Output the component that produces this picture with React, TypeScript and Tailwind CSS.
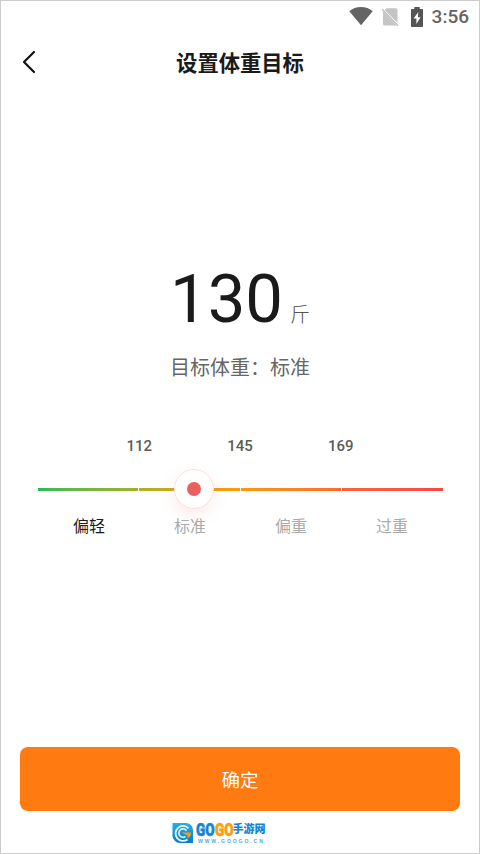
// 体重目标设置页
// 自上而下：状态栏、标题栏、目标体重、区间滑块、确定按钮、底部站点标识。

import { useState } from 'react';

interface Range { label: string; color: string }

const RANGES: Range[] = [
  { label: '偏轻', color: 'bg-linear-to-r from-[#22bb57] to-[#a0b020]' },
  { label: '标准', color: 'bg-linear-to-r from-[#acb022] to-[#ff9a06]' },
  { label: '偏重', color: 'bg-linear-to-r from-[#fb990c] to-[#ff6a2c]' },
  { label: '过重', color: 'bg-linear-to-r from-[#fb6336] to-[#fb4545]' },
];
const LIMITS = [112, 145, 169]; // 各区间之间的分界值（斤）

function StatusBar() {
  return (
    <div className="flex h-8 items-center justify-end pr-[10px] text-[#646464]">
      <svg className="mt-[-2px] h-5 w-6" viewBox="0 0 24 20" fill="currentColor">
        <path d="M.3 5.2C3.4 2.500 7.400 1 12 1s8.600 1.500 11.700 4.200L12 19.200z" />
      </svg>
      <svg className="mt-[-1px] ml-2 h-5 w-[18px]" viewBox="0 0 18 20">
        <path d="M5.500 1.200H15A1.500 1.500 0 0 1 16.500 2.700V15.800L3.600 3zM2 4.500 15.500 18.500H3.500A1.500 1.500 0 0 1 2 17z" fill="#c4c4c4" />
        <path d="M1 2.200 17 18.800" stroke="#bdbdbd" strokeWidth="1.500" />
      </svg>
      <svg className="mt-[-1px] ml-[11px] h-5 w-[14px]" viewBox="0 0 14 20">
        <path d="M4.300 0h5.400v2h2.500c.5 0 .8.300.8.800v16.400c0 .5-.3.800-.8.800H1.800c-.5 0-.8-.3-.8-.8V2.800c0-.5.300-.8.800-.8h2.500z" fill="#555" />
        <path d="M8.300 5 3.600 11.500h2.800V17l4.200-6.800H7.900z" fill="#fff" />
      </svg>
      <span className="ml-[8px] text-[19px] leading-8 font-medium">3:56</span>
    </div>
  );
}

function SiteMark() {
  return (
    <div className="ml-[152px] flex h-6 items-center">
      <svg className="h-[22px] w-[22px]" viewBox="0 0 22 22">
        <defs>
          <linearGradient id="mark" x1="0" y1="0" x2="0" y2="1">
            <stop offset="0" stopColor="#27aee6" />
            <stop offset="1" stopColor="#087ac6" />
          </linearGradient>
        </defs>
        <path d="M.5 1H14a7 7 0 0 1 7 7v13H8a7.500 7.500 0 0 1-7.500-7.500z" fill="url(#mark)" />
        <path d="M16.500 6.300A7.500 7.500 0 1 0 15.500 17.500" fill="none" stroke="#e5f7ff" strokeWidth="1.800" />
        <path d="M14.500 8.700A4.200 4.200 0 1 0 13.500 14.500" fill="none" stroke="#d5f2fd" strokeWidth="1.700" />
        <path d="M9.500 10.500H19c0 3-1.300 5-3.500 6v-3z" fill="#ff9c17" />
      </svg>
      <div className="ml-[2px] flex w-[72px] flex-col">
        <div className="flex h-[14px] items-center whitespace-nowrap">
          <span className="w-[18.500px] origin-left scale-x-[0.75] text-[18px] leading-[14px] font-black text-[#1285d4] [-webkit-text-stroke:0.6px_#1285d4]">GO</span>
          <span className="w-[18px] origin-left scale-x-[0.75] text-[18px] leading-[14px] font-black text-[#ff9c08] [-webkit-text-stroke:0.6px_#ff9c08]">GO</span>
          <span className="text-[11px] leading-[14px] font-black text-[#1285d4]">手游网</span>
        </div>
        <span className="mt-[2px] pl-[2px] font-['Liberation_Sans'] text-[5px] leading-[5px] font-bold tracking-[1.950px] whitespace-nowrap text-[#49aee4]">WWW.GOOGO.CN</span>
      </div>
    </div>
  );
}

export default function App() {
  const [weight] = useState(130);
  const [active] = useState(0); // 当前高亮的区间标签

  return (
    <div className="flex h-[854px] w-[480px] flex-col border border-[#ccc] bg-white font-[Roboto,'Noto_Sans_CJK_SC',sans-serif]">
      <StatusBar />

      <header className="grid h-[58px] grid-cols-[60px_1fr_60px] items-center">
        <button className="pl-[21px]" aria-label="返回">
          <svg className="h-6 w-[14px]" viewBox="0 0 14 24" fill="none" stroke="#111" strokeWidth="2.200" strokeLinecap="round" strokeLinejoin="round">
            <path d="M12 2 2 12l10 10" />
          </svg>
        </button>
        <h1 className="pt-[3px] text-center text-[21.300px] font-bold text-[#1a1a1a]">设置体重目标</h1>
      </header>

      {/* 目标体重 */}
      <section className="mt-[168px] flex flex-col items-center">
        <div className="flex h-[80px] items-baseline justify-center">
          <span className="text-[67px] leading-[80px] text-[#1a1a1a]">{weight}</span>
          <span className="ml-[7px] text-[20px] leading-[30px] font-light text-[#555]">斤</span>
        </div>
        <p className="mt-[14px] text-[20px] leading-[30px] text-[#666]">目标体重：标准</p>
      </section>

      {/* 区间滑块 */}
      <section className="mt-[53px] px-[36.500px]">
        <div className="flex justify-center">
          {LIMITS.map((n) => (
            <span key={n} className="w-[100.700px] text-center text-[15px] leading-5 font-medium text-[#5c5c5c]">{n}</span>
          ))}
        </div>
        <div className="relative mt-[32px] flex gap-px">
          {RANGES.map((r) => (
            <div key={r.label} className={`h-[3px] flex-1 ${r.color}`} />
          ))}
          <div className="absolute -top-[19px] left-[136.500px] flex h-[40px] w-[40px] items-center justify-center rounded-full border border-[#fde0dc] bg-white shadow-[0_6px_16px_rgba(235,95,90,0.13)]">
            <div className="h-[14px] w-[14px] rounded-full bg-[#eb5f5c]" />
          </div>
        </div>
        <div className="mt-[24px] flex pl-px">
          {RANGES.map((r, i) => (
            <span key={r.label} className={`flex-1 text-center text-[16px] leading-6 ${i === active ? 'text-[#1a1a1a]' : 'text-[#aaa]'}`}>{r.label}</span>
          ))}
        </div>
      </section>

      <footer className="mt-auto px-[19px]">
        <button className="h-[64px] w-full rounded-[8px] bg-[#ff7a10] pt-[5px] text-[18.500px] text-white">确定</button>
        <div className="mt-[10px] mb-[8px]">
          <SiteMark />
        </div>
      </footer>
    </div>
  );
}
